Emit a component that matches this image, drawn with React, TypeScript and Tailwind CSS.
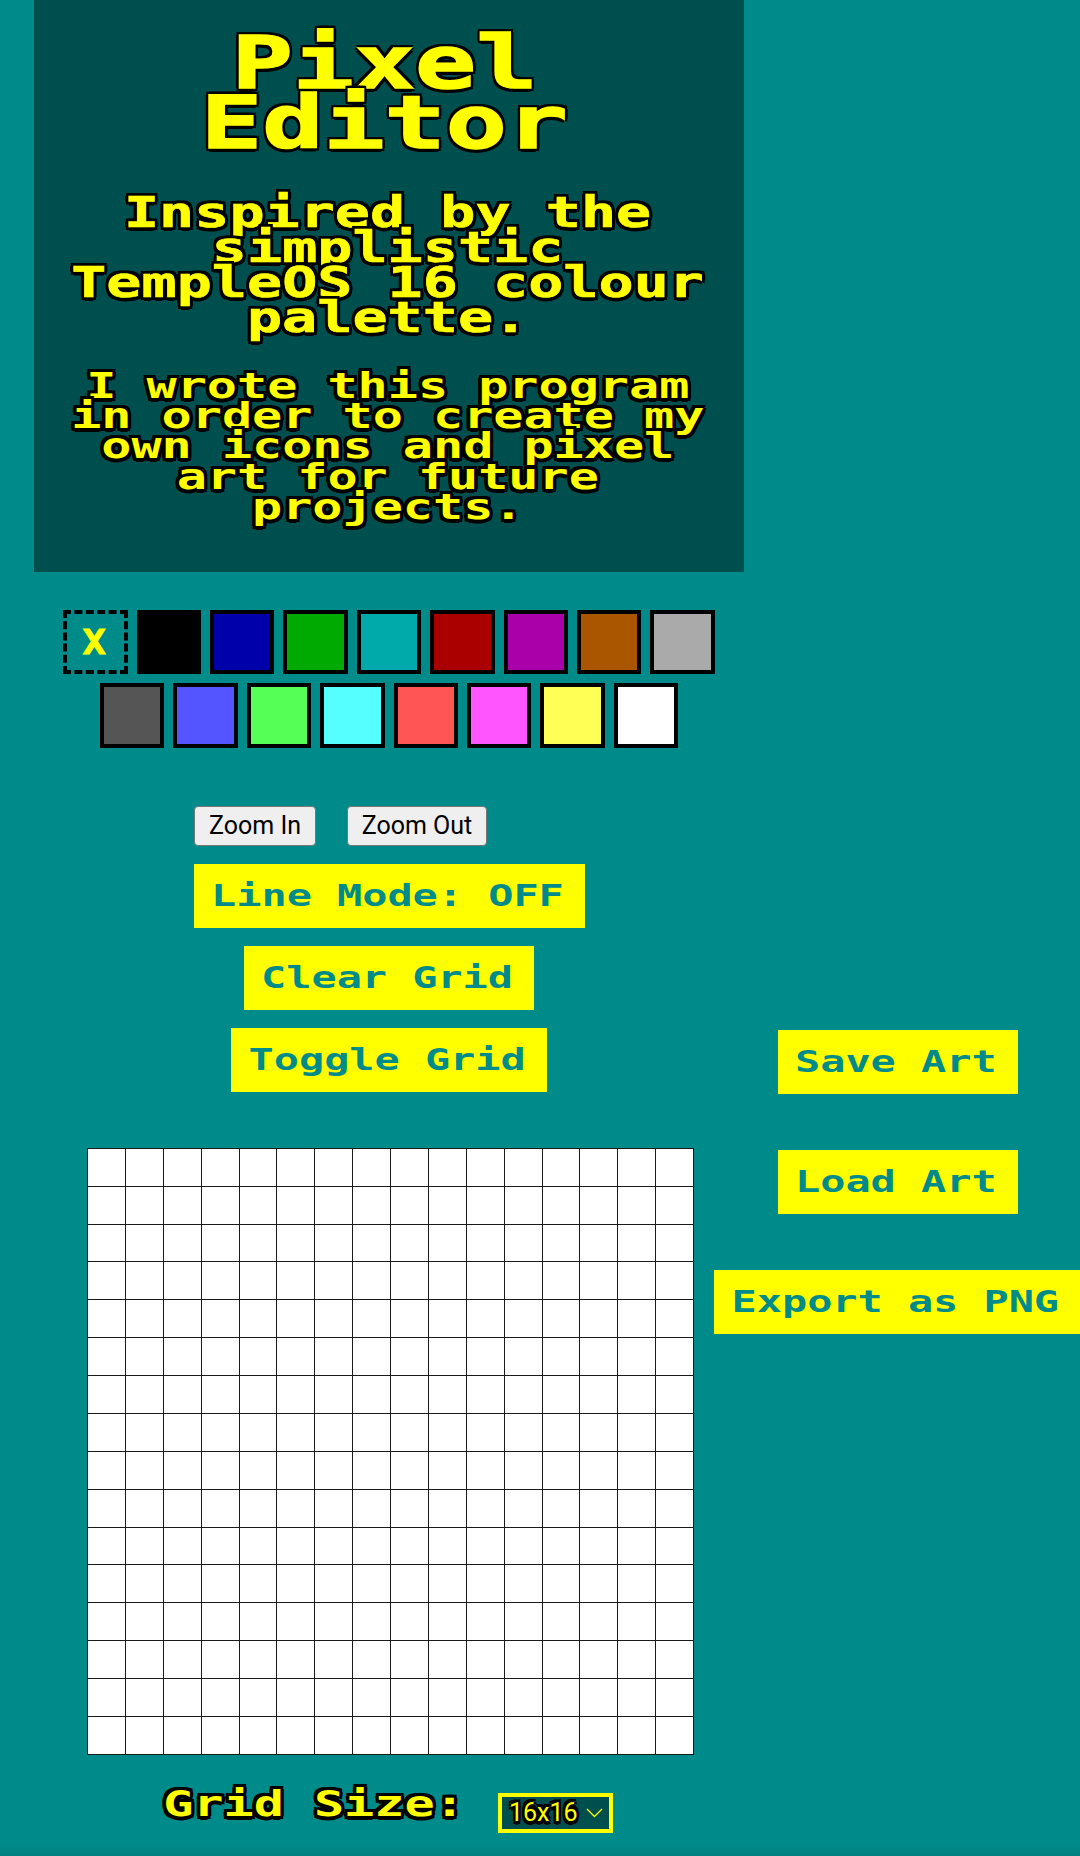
import React from "react";

const mono = "font-['DejaVu_Sans_Mono','Liberation_Mono',monospace] font-bold";
const outline =
  "[text-shadow:-2.6px_0_#000,2.6px_0_#000,0_-3.5px_#000,0_3.5px_#000,-2.2px_-3px_#000,2.2px_-3px_#000,-2.2px_3px_#000,2.2px_3px_#000]";

// Stretched monospace text whose cells are as wide as they are tall.
function Wide({ children, className = "" }: { children: string; className?: string }) {
  return (
    <span className={`flex justify-center text-center whitespace-pre ${mono} ${className}`}>
      <span className="inline-block scale-x-[1.384]">{children}</span>
    </span>
  );
}

function ArtButton({ label, className }: { label: string; className: string }) {
  return (
    <button className={`flex h-[64px] shrink-0 items-center justify-center bg-[#ffff00] text-[#008b8b] ${className}`}>
      <Wide className="mr-[4px] text-[30.24px] leading-[25.2px]">{label}</Wide>
    </button>
  );
}

const dark = ["#000000", "#0000aa", "#00aa00", "#00aaaa", "#aa0000", "#aa00aa", "#aa5500", "#aaaaaa"];
const light = ["#555555", "#5555ff", "#55ff55", "#55ffff", "#ff5555", "#ff55ff", "#ffff55", "#ffffff"];

function Swatch({ color }: { color: string }) {
  return <button className="size-[64.4px] border-4 border-black" style={{ backgroundColor: color }} />;
}

export default function App() {
  return (
    <main className="relative flex h-[1856px] w-[1080px] overflow-hidden bg-[#008b8b]">
      <section className="ml-[34px] flex w-[710px] shrink-0 flex-col items-center">
        <header className="h-[572px] w-full bg-[#004f4f] pt-[33px] text-[#ffff00]">
          <h1 className={`pr-[8px] text-[73.4px] leading-[60.3px] [-webkit-text-stroke:1.5px_#ffff00] ${outline}`}>
            <Wide>{"Pixel\nEditor"}</Wide>
          </h1>
          <h2 className={`mt-[41px] pr-[3px] text-[42.2px] leading-[35.3px] [-webkit-text-stroke:0.6px_#ffff00] ${outline}`}>
            <Wide>{"Inspired by the\nsimplistic\nTempleOS 16 colour\npalette."}</Wide>
          </h2>
          <h3 className={`mt-[35px] pr-[3px] text-[36.2px] leading-[30.3px] ${outline}`}>
            <Wide>{"I wrote this program\nin order to create my\nown icons and pixel\nart for future\nprojects."}</Wide>
          </h3>
        </header>

        <div className="mt-[38px] flex gap-[9px]">
          <button className="flex size-[64.4px] items-center justify-center border-4 border-dashed border-black text-[#ffff00]">
            <span className={`${mono} mr-[3px] inline-block scale-x-[1.12] text-[34px] leading-none [-webkit-text-stroke:1px_#ffff00]`}>X</span>
          </button>
          {dark.map((c) => (
            <Swatch key={c} color={c} />
          ))}
        </div>
        <div className="mt-[9px] flex gap-[9px]">
          {light.map((c) => (
            <Swatch key={c} color={c} />
          ))}
        </div>

        <div className="mt-[58px] flex w-full gap-[31px] pl-[160px] font-[Roboto,sans-serif] text-[25px] leading-none text-black">
          <button className="h-[40px] w-[122px] rounded-[4px] border border-[#767676] bg-[#efefef] whitespace-nowrap">Zoom In</button>
          <button className="h-[40px] w-[140px] rounded-[4px] border border-[#767676] bg-[#efefef] whitespace-nowrap">Zoom Out</button>
        </div>

        <div className="mt-[18px] flex flex-col items-center gap-[18px]">
          <ArtButton label="Line Mode: OFF" className="w-[391px]" />
          <ArtButton label="Clear Grid" className="w-[290px]" />
          <ArtButton label="Toggle Grid" className="w-[316px]" />
        </div>

        <div className="mt-[56px] ml-[3px] grid size-[607px] shrink-0 grid-cols-16 grid-rows-16 border-t border-l border-[#1a1a1a]">
          {Array.from({ length: 256 }, (_, i) => (
            <div key={i} className="border-r border-b border-[#1a1a1a] bg-white" />
          ))}
        </div>

        <div className="mt-[34px] flex w-full pl-[128px]">
          <label className={`flex w-[304px] text-[36.2px] leading-[30.3px] text-[#ffff00] ${outline}`}>
            <Wide className="w-full">Grid Size:</Wide>
          </label>
          <button className="mt-[4px] ml-[32px] flex h-[40px] w-[115px] items-center justify-between border-4 border-[#ffff00] bg-[#004f4f] pr-[6px] pl-[7px] font-[Roboto,sans-serif] text-[25px] leading-none text-[#ffff00]">
            <span className={outline}>16x16</span>
            <svg width="17" height="10" viewBox="0 0 17 10" fill="none" stroke="currentColor" strokeWidth="1.3">
              <path d="M1 1l7.5 7.5L16 1" />
            </svg>
          </button>
        </div>
      </section>

      <aside className="ml-[-30px] flex w-[367px] shrink-0 flex-col items-center gap-[56px] pt-[1030px]">
        <ArtButton label="Save Art" className="w-[240px]" />
        <ArtButton label="Load Art" className="w-[240px]" />
        <ArtButton label="Export as PNG" className="w-[367px]" />
      </aside>
      <div className="absolute inset-x-0 bottom-0 h-[14px] bg-linear-to-b from-transparent to-black/8" />
    </main>
  );
}
